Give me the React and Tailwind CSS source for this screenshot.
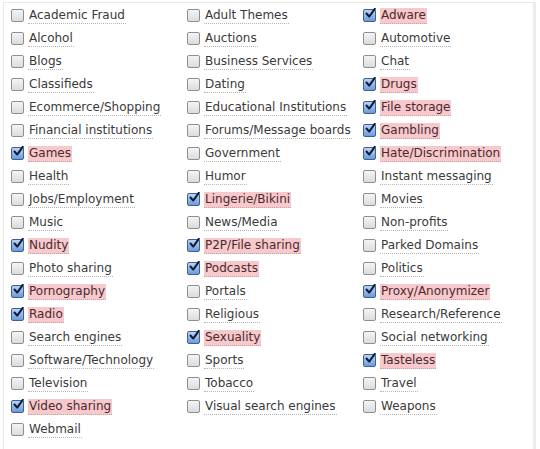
import React from "react";

const columns = [
  [
    ["Academic Fraud", false],
    ["Alcohol", false],
    ["Blogs", false],
    ["Classifieds", false],
    ["Ecommerce/Shopping", false],
    ["Financial institutions", false],
    ["Games", true],
    ["Health", false],
    ["Jobs/Employment", false],
    ["Music", false],
    ["Nudity", true],
    ["Photo sharing", false],
    ["Pornography", true],
    ["Radio", true],
    ["Search engines", false],
    ["Software/Technology", false],
    ["Television", false],
    ["Video sharing", true],
    ["Webmail", false],
  ],
  [
    ["Adult Themes", false],
    ["Auctions", false],
    ["Business Services", false],
    ["Dating", false],
    ["Educational Institutions", false],
    ["Forums/Message boards", false],
    ["Government", false],
    ["Humor", false],
    ["Lingerie/Bikini", true],
    ["News/Media", false],
    ["P2P/File sharing", true],
    ["Podcasts", true],
    ["Portals", false],
    ["Religious", false],
    ["Sexuality", true],
    ["Sports", false],
    ["Tobacco", false],
    ["Visual search engines", false],
  ],
  [
    ["Adware", true],
    ["Automotive", false],
    ["Chat", false],
    ["Drugs", true],
    ["File storage", true],
    ["Gambling", true],
    ["Hate/Discrimination", true],
    ["Instant messaging", false],
    ["Movies", false],
    ["Non-profits", false],
    ["Parked Domains", false],
    ["Politics", false],
    ["Proxy/Anonymizer", true],
    ["Research/Reference", false],
    ["Social networking", false],
    ["Tasteless", true],
    ["Travel", false],
    ["Weapons", false],
  ],
];

function Box({ checked }) {
  if (checked) {
    return (
      <span className="relative flex h-[13px] w-[13px] shrink-0 items-center justify-center rounded-[2px] border border-[#3a5f9e] bg-gradient-to-b from-[#bcd3f2] to-[#6f9ad8]">
        <svg width="11" height="11" viewBox="0 0 11 11" className="absolute -top-[2px] left-[1px]">
          <path d="M1.5 5.5 L4.2 8.6 L9.8 0.8" fill="none" stroke="#0b1c3a" strokeWidth="2" strokeLinecap="round" strokeLinejoin="round" />
        </svg>
      </span>
    );
  }
  return (
    <span className="h-[13px] w-[13px] shrink-0 rounded-[2px] border border-[#8f8f8f] bg-gradient-to-b from-[#f4f4f4] to-[#dcdcdc]" />
  );
}

function Item({ label, checked }) {
  return (
    <div className="flex h-[23px] items-center gap-[4px]">
      <Box checked={checked} />
      <span
        className={
          checked
            ? "bg-[#f7c9cc] px-[1px] leading-[15px] text-[#4a2a2c] border-b border-dotted border-[#c9a0a3]"
            : "px-[1px] leading-[15px] text-[#3a3a3a] border-b border-dotted border-[#b5b5b5]"
        }
      >
        {label}
      </span>
    </div>
  );
}

export default function App() {
  return (
    <div className="h-[449px] w-[540px] overflow-hidden bg-white pl-[3px] pt-[2px] font-['DejaVu_Sans',Verdana,sans-serif] text-[12px]">
      <div className="h-[460px] w-[533px] border-l border-t border-[#e8e8e8] border-r-[3px] border-r-[#ececec] pl-[7px] pt-[1px]">
        <div className="grid grid-cols-[176px_176px_170px]">
          {columns.map((col, i) => (
            <div key={i} className="flex flex-col">
              {col.map(([label, checked]) => (
                <Item key={label} label={label} checked={checked} />
              ))}
            </div>
          ))}
        </div>
      </div>
    </div>
  );
}
